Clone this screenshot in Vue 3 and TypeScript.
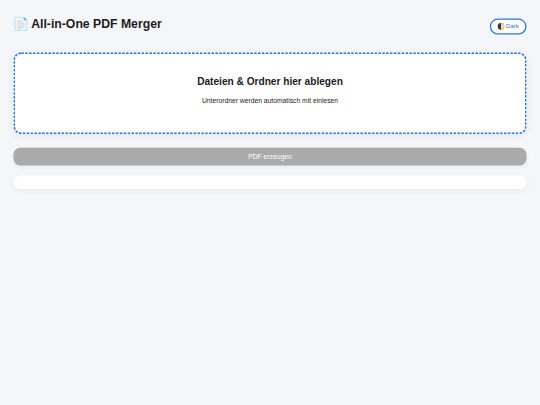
<template>
  <div class="app" :class="{ dark: isDark }">
    <div class="page">
      <header class="topbar">
        <h1 class="title">
          <svg class="doc" viewBox="0 0 36 36" aria-hidden="true">
            <path d="M3.500 1.500h22l7 7v26h-29z" fill="#f0f5f8" stroke="#afd9f2" stroke-width="2" />
            <path d="M25 1v8.500h8z" fill="#64b5e8" />
            <path d="M9 11h11M9 16h18M9 21h18M9 26h18M9 30h10" stroke="#c8ccce" stroke-width="2" />
          </svg>
          <span>All-in-One PDF Merger</span>
        </h1>
        <button type="button" class="theme" @click="isDark = !isDark">
          <svg class="moon" viewBox="0 0 16 16" aria-hidden="true">
            <circle cx="8" cy="8" r="7.500" fill="#33373b" />
            <path d="M8 .5a7.500 7.500 0 0 1 0 15z" fill="#f5d992" />
          </svg>
          <span>{{ isDark ? 'Light' : 'Dark' }}</span>
        </button>
      </header>

      <section class="dropzone" @dragover.prevent @drop.prevent="onDrop">
        <svg class="outline" aria-hidden="true">
          <rect x="1.500" y="2" width="1213" height="190" rx="17" />
        </svg>
        <h2>Dateien &amp; Ordner hier ablegen</h2>
        <p>Unterordner werden automatisch mit einlesen</p>
      </section>

      <button type="button" class="build" :disabled="!files.length">PDF erzeugen</button>

      <div class="list">
        <div v-for="name in files" :key="name">{{ name }}</div>
      </div>
    </div>
  </div>
</template>

<script setup lang="ts">
import { ref } from 'vue'

const isDark = ref(false)
const files = ref<string[]>([])

function onDrop(e: DragEvent) {
  const dropped = Array.from(e.dataTransfer?.files ?? [])
  files.value.push(...dropped.map(f => f.name))
}
</script>

<style>
body { background: #f4f6fa; overflow: hidden; }
</style>

<style scoped>
.app {
  --bg: #f4f6fa;
  --card: #fff;
  --text: #1c1c1e;
  --accent: #2a76dc;
  width: 540px;
  height: 405px;
  overflow: hidden;
  background: var(--bg);
}
.app.dark { --bg: #15171c; --card: #22252c; --text: #eee; }
/* desktop layout of 1280x960, shown in a compact window */
.page {
  box-sizing: border-box;
  width: 1280px;
  height: 960px;
  padding: 32px;
  transform: scale(0.421875);
  transform-origin: 0 0;
  color: var(--text);
  font-family: "Liberation Sans", Arial, sans-serif;
  font-size: 16px;
  line-height: 1.6;
}
.topbar {
  display: flex;
  align-items: center;
  justify-content: space-between;
  height: 61px;
  margin-bottom: 31px;
}
.title {
  display: flex; align-items: center; gap: 7px;
  margin: 0 0 12px;
  font-size: 29px;
}
.doc { width: 35px; height: 35px; }
.theme {
  display: flex; align-items: center; gap: 4px;
  box-sizing: border-box;
  height: 38px;
  padding: 0 15px;
  border: 3px solid var(--accent);
  border-radius: 19px;
  background: var(--card);
  color: var(--accent);
  font: 14.4px "Liberation Sans", Arial, sans-serif;
  cursor: pointer;
}
.theme span { padding-bottom: 2px; }
.moon { width: 17px; height: 17px; }
.dropzone {
  position: relative;
  box-sizing: border-box;
  height: 194px;
  padding: 51px 32px;
  border-radius: 18px;
  background: var(--card);
  box-shadow: 0 4px 20px rgba(0,0,0,0.06);
  text-align: center;
}
.outline {
  position: absolute;
  inset: 0;
  width: 100%;
  height: 100%;
}
.outline rect {
  fill: none;
  stroke: var(--accent);
  stroke-width: 4;
  stroke-dasharray: 6 3.200;
}
.dropzone h2 { margin: 0 0 13px; font-size: 24px; }
.dropzone p { margin: 0; }
.build {
  display: block;
  width: 100%;
  height: 42px;
  margin-top: 32px;
  border: 0;
  border-radius: 16px;
  background: var(--accent);
  color: #fff;
  font: 16px "Liberation Sans", Arial, sans-serif;
  box-shadow: 0 4px 12px rgba(0,0,0,0.06);
}
.build:disabled { background: #aaa; }
.list {
  margin-top: 24px;
  padding: 16px;
  border-radius: 16px;
  background: var(--card);
  box-shadow: 0 4px 16px rgba(0,0,0,0.05);
}
</style>
